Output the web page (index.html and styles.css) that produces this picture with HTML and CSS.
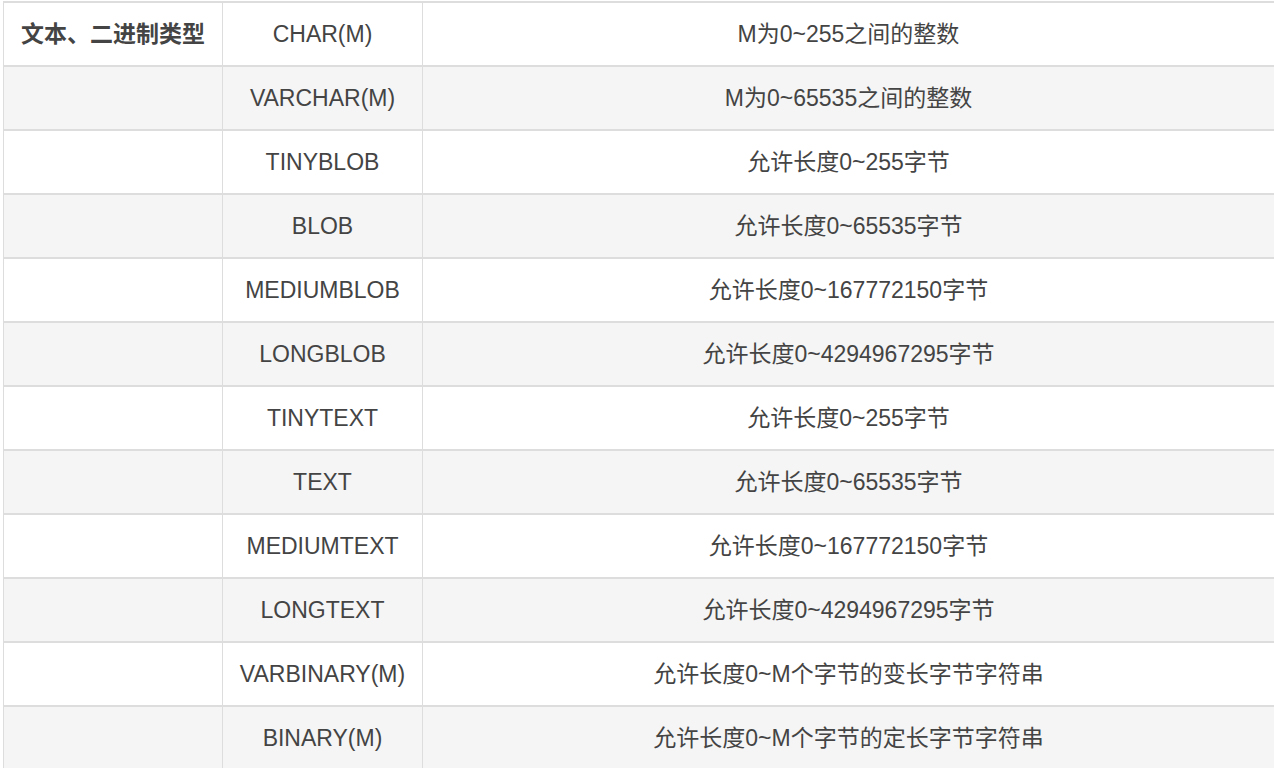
FILE: index.html
```html
<!DOCTYPE html>
<html lang="zh-CN">
<head>
<meta charset="utf-8">
<title>文本、二进制类型</title>
<link rel="stylesheet" href="styles.css">
</head>
<body>
<table class="types">
  <colgroup>
    <col class="c-cat">
    <col class="c-type">
    <col class="c-desc">
  </colgroup>
  <tbody>
    <tr><th class="cat">文本、二进制类型</th><td>CHAR(M)</td><td>M为0~255之间的整数</td></tr>
    <tr><td class="cat"></td><td>VARCHAR(M)</td><td>M为0~65535之间的整数</td></tr>
    <tr><td class="cat"></td><td>TINYBLOB</td><td>允许长度0~255字节</td></tr>
    <tr><td class="cat"></td><td>BLOB</td><td>允许长度0~65535字节</td></tr>
    <tr><td class="cat"></td><td>MEDIUMBLOB</td><td>允许长度0~167772150字节</td></tr>
    <tr><td class="cat"></td><td>LONGBLOB</td><td>允许长度0~4294967295字节</td></tr>
    <tr><td class="cat"></td><td>TINYTEXT</td><td>允许长度0~255字节</td></tr>
    <tr><td class="cat"></td><td>TEXT</td><td>允许长度0~65535字节</td></tr>
    <tr><td class="cat"></td><td>MEDIUMTEXT</td><td>允许长度0~167772150字节</td></tr>
    <tr><td class="cat"></td><td>LONGTEXT</td><td>允许长度0~4294967295字节</td></tr>
    <tr><td class="cat"></td><td>VARBINARY(M)</td><td>允许长度0~M个字节的变长字节字符串</td></tr>
    <tr><td class="cat"></td><td>BINARY(M)</td><td>允许长度0~M个字节的定长字节字符串</td></tr>
  </tbody>
</table>
</body>
</html>
```
FILE: styles.css
```css
html {
  overflow: hidden;
}
body {
  margin: 0;
  padding: 1px 0 0 3px;
  background: #ffffff;
  font-family: "Liberation Sans", Arial, "Noto Sans CJK SC", sans-serif;
  font-size: 23px;
  color: #444444;
}
.types {
  border-collapse: separate;
  border-spacing: 0;
  border-top: 2px solid #dddddd;
  border-left: 1px solid #dddddd;
  table-layout: fixed;
  width: 1272px;
}
.c-cat { width: 219px; }
.c-type { width: 200px; }
.c-desc { width: 852px; }
.types th,
.types td {
  height: 60px;
  padding: 2px 0 0;
  text-align: center;
  vertical-align: middle;
  border-right: 1px solid #dddddd;
  border-bottom: 2px solid #dddddd;
  white-space: nowrap;
  line-height: 1.2;
}
.types th {
  font-weight: bold;
}
.types tr:nth-child(odd) {
  background: #ffffff;
}
.types tr:nth-child(even) {
  background: #f5f5f5;
}
```
